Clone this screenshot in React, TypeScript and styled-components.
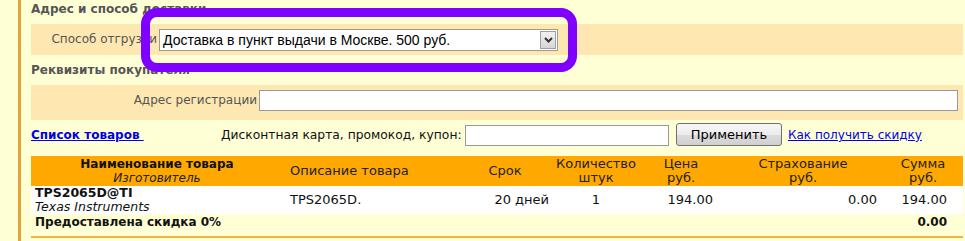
import React from 'react';
import styled, { createGlobalStyle } from 'styled-components';

const Global = createGlobalStyle`
  html, body { margin: 0; padding: 0; background: #FFFFD5; }
  body { font-family: "DejaVu Sans", Verdana, sans-serif; font-size: 13px; color: #111; }
  * { box-sizing: border-box; }
`;

const Page = styled.div`
  padding-left: 18px;
  width: 963px;
  height: 241px;
  overflow: hidden;
`;

const Frame = styled.div`
  position: relative;
  border-left: 3px solid #E3A43A;
  padding-left: 10px;
  height: 241px;
`;

const SectionTitle = styled.div<{ $h: number; $pt: number }>`
  height: ${p => p.$h}px;
  padding-top: ${p => p.$pt}px;
  font-size: 12px;
  font-weight: bold;
  line-height: 16px;
  color: #555;
`;

const Band = styled.div<{ $h: number; $pt?: number; $align: string }>`
  display: flex;
  align-items: ${p => p.$align};
  gap: 2px;
  height: ${p => p.$h}px;
  padding-top: ${p => p.$pt ?? 0}px;
  background: #FFE7B1;
`;

const Label = styled.label<{ $w: number }>`
  width: ${p => p.$w}px;
  text-align: right;
  font-size: 12px;
  line-height: 21px;
  color: #555;
  white-space: nowrap;
`;

const SelectBox = styled.div`
  display: flex;
  align-items: center;
  width: 399px;
  height: 22px;
  border: 1px solid #9A9A9A;
  background: #fff;
  padding: 0 1px 0 3px;
`;

const SelectText = styled.span`
  flex: 1;
  font-family: "Liberation Sans", Arial, sans-serif;
  font-size: 14px;
  color: #000;
  white-space: nowrap;
`;

const ArrowBox = styled.span`
  display: flex;
  align-items: center;
  justify-content: center;
  width: 16px;
  height: 18px;
  border: 1px solid #A0A0A0;
  background: linear-gradient(#F2F2F2, #D6D6D6);
`;

const TextInput = styled.input<{ $w: number }>`
  width: ${p => p.$w}px;
  height: 21px;
  border: 1px solid #999;
  background: #fff;
  padding: 0 2px;
  margin: 0;
  font: 13px "DejaVu Sans", Verdana, sans-serif;
`;

const Toolbar = styled.div`
  display: flex;
  align-items: flex-start;
  height: 36px;
  padding-top: 5px;
`;

const ListLink = styled.a`
  width: 190px;
  font-size: 12px;
  font-weight: bold;
  line-height: 21px;
  color: #0000EE;
  text-decoration: underline;
  white-space: pre;
`;

const DiscountLabel = styled.span`
  font-size: 12.3px;
  line-height: 21px;
  width: 244px;
  white-space: nowrap;
`;

const ApplyButton = styled.button`
  width: 106px;
  height: 23px;
  margin: -2px 6px 0 7px;
  border: 1px solid #707070;
  border-radius: 3px;
  background: linear-gradient(#F7F7F7 0%, #ECECEC 50%, #DCDCDC 51%, #D0D0D0 100%);
  font: 13px "DejaVu Sans", Verdana, sans-serif;
  color: #000;
  padding: 0;
`;

const HelpLink = styled.a`
  font-size: 12px;
  line-height: 21px;
  color: #0000EE;
  text-decoration: underline;
  white-space: nowrap;
`;

const Table = styled.table`
  width: 932px;
  border-collapse: collapse;
  table-layout: fixed;
  border-bottom: 2px solid #F2B33D;
`;

const HeadRow = styled.tr`
  height: 30px;
  background: #FFA800;
`;

const Th = styled.th<{ $align?: string; $pl?: number }>`
  font-weight: normal;
  font-size: 13px;
  line-height: 14px;
  color: #222;
  padding: 0 0 0 ${p => p.$pl ?? 0}px;
  text-align: ${p => p.$align ?? 'center'};
  vertical-align: middle;
`;

const HeadStrong = styled.b`
  display: block;
  font-size: 12px;
  color: #111;
`;

const HeadItalic = styled.i`
  display: block;
  font-size: 12px;
`;

const DataRow = styled.tr`
  height: 28px;
  background: #fff;
`;

const Td = styled.td<{ $align?: string; $pl?: number; $pr?: number }>`
  font-size: 13px;
  line-height: 14px;
  padding: 0 ${p => p.$pr ?? 0}px 0 ${p => p.$pl ?? 0}px;
  text-align: ${p => p.$align ?? 'left'};
  vertical-align: middle;
  white-space: nowrap;
`;

const PartName = styled.b`
  display: block;
  font-size: 12.5px;
`;

const Maker = styled.i`
  display: block;
  font-size: 12.5px;
`;

const TotalRow = styled.tr`
  height: 23px;
`;

const TotalCell = styled.td<{ $align?: string; $pl?: number; $pr?: number }>`
  font-size: 12px;
  font-weight: bold;
  line-height: 16px;
  padding: 0 ${p => p.$pr ?? 0}px 0 ${p => p.$pl ?? 0}px;
  text-align: ${p => p.$align ?? 'left'};
  vertical-align: top;
  white-space: nowrap;
`;

const Highlight = styled.div`
  position: absolute;
  left: 120px;
  top: 8px;
  width: 436px;
  height: 64px;
  border: 9px solid #8000FF;
  border-radius: 16px;
  pointer-events: none;
`;

export default function App() {
  return (
    <>
      <Global />
      <Page>
        <Frame>
          <SectionTitle $h={24} $pt={1}>Адрес и способ доставки</SectionTitle>
          <Band $h={31} $align="center">
            <Label $w={126}>Способ отгрузки</Label>
            <SelectBox>
              <SelectText>Доставка в пункт выдачи в Москве. 500 руб.</SelectText>
              <ArrowBox>
                <svg width="9" height="6" viewBox="0 0 9 6">
                  <polyline points="1,1 4.5,4.5 8,1" fill="none" stroke="#333" strokeWidth="2" />
                </svg>
              </ArrowBox>
            </SelectBox>
          </Band>
          <SectionTitle $h={30} $pt={7}>Реквизиты покупателя</SectionTitle>
          <Band $h={35} $pt={5} $align="flex-start">
            <Label $w={226}>Адрес регистрации</Label>
            <TextInput $w={699} />
          </Band>
          <Toolbar>
            <ListLink href="#">Список товаров </ListLink>
            <DiscountLabel>Дисконтная карта, промокод, купон:</DiscountLabel>
            <TextInput $w={204} />
            <ApplyButton>Применить</ApplyButton>
            <HelpLink href="#">Как получить скидку</HelpLink>
          </Toolbar>
          <Table>
            <colgroup>
              <col style={{ width: 252 }} />
              <col style={{ width: 174 }} />
              <col style={{ width: 96 }} />
              <col style={{ width: 86 }} />
              <col style={{ width: 84 }} />
              <col style={{ width: 160 }} />
              <col style={{ width: 80 }} />
            </colgroup>
            <thead>
              <HeadRow>
                <Th>
                  <HeadStrong>Наименование товара</HeadStrong>
                  <HeadItalic>Изготовитель</HeadItalic>
                </Th>
                <Th $align="left" $pl={7}>Описание товара</Th>
                <Th>Срок</Th>
                <Th>Количество<br />штук</Th>
                <Th>Цена<br />руб.</Th>
                <Th>Страхование<br />руб.</Th>
                <Th>Сумма<br />руб.</Th>
              </HeadRow>
            </thead>
            <tbody>
              <DataRow>
                <Td $pl={4}>
                  <PartName>TPS2065D@TI</PartName>
                  <Maker>Texas Instruments</Maker>
                </Td>
                <Td $pl={7}>TPS2065D.</Td>
                <Td $align="right" $pr={4}>20 дней</Td>
                <Td $align="center">1</Td>
                <Td $align="right" $pr={10}>194.00</Td>
                <Td $align="right" $pr={6}>0.00</Td>
                <Td $align="right" $pr={16}>194.00</Td>
              </DataRow>
              <TotalRow>
                <TotalCell colSpan={6} $pl={4}>Предоставлена скидка 0%</TotalCell>
                <TotalCell $align="right" $pr={16}>0.00</TotalCell>
              </TotalRow>
            </tbody>
          </Table>
          <Highlight />
        </Frame>
      </Page>
    </>
  );
}
